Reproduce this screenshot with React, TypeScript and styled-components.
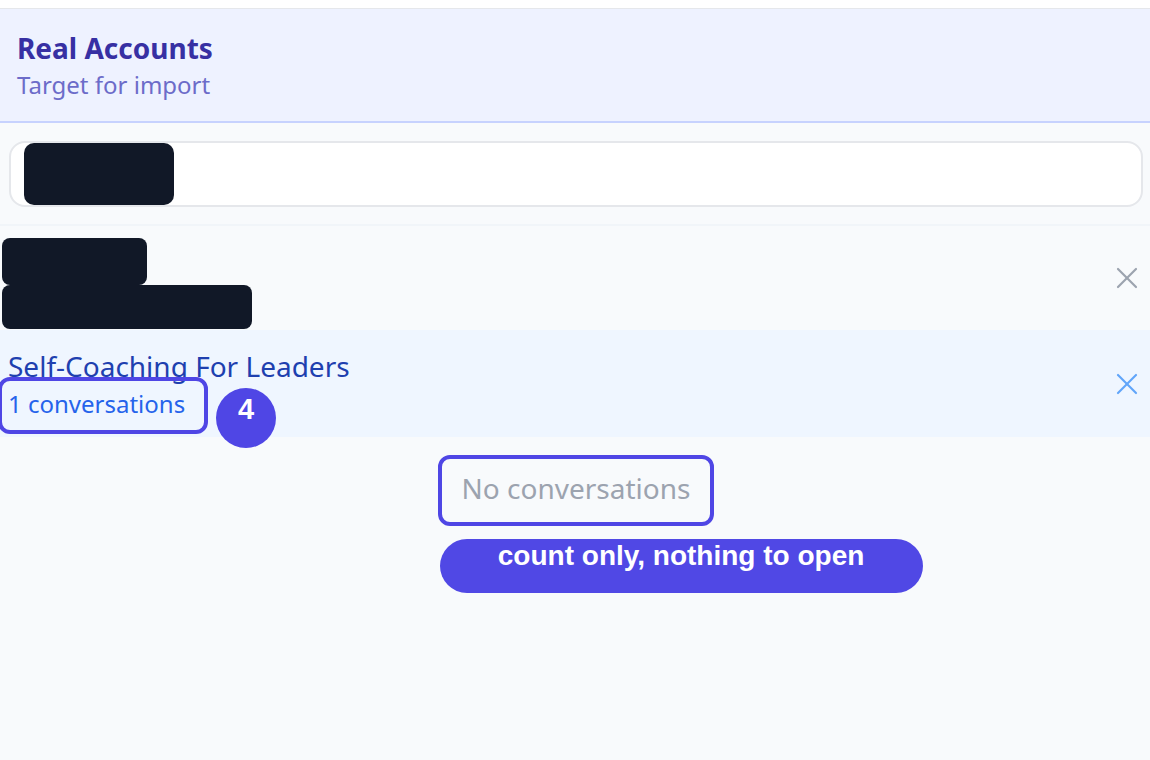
import { createGlobalStyle } from "styled-components";
import styled from "styled-components";

const GlobalStyle = createGlobalStyle`
  html, body {
    margin: 0;
    padding: 0;
    background: #ffffff;
  }
  body {
    font-family: "Noto Sans", "Open Sans", sans-serif;
  }
`;

function CloseIcon({ color }: { color: string }) {
  return (
    <svg width="22" height="22" viewBox="0 0 22 22" fill="none" stroke={color} strokeWidth="2.2" strokeLinecap="round">
      <path d="M2 2L20 20" />
      <path d="M20 2L2 20" />
    </svg>
  );
}

export default function App() {
  return (
    <>
      <GlobalStyle />
      <Page>
        <Panel>
          <Header>
            <Title>Real Accounts</Title>
            <Subtitle>Target for import</Subtitle>
          </Header>

          <SearchArea>
            <SearchBox>
              <Redacted $w={150} $h={62} $r={10} />
            </SearchBox>
          </SearchArea>

          <AccountRow>
            <AccountInfo>
              <Redacted $w={145} $h={47} $r={8} />
              <Redacted $w={250} $h={44} $r={8} />
            </AccountInfo>
            <CloseButton>
              <CloseIcon color="#9ca3af" />
            </CloseButton>
          </AccountRow>

          <AccountRow $selected>
            <AccountInfo $selected>
              <CourseName>Self-Coaching For Leaders</CourseName>
              <CountWrap>
                <CountText>1 conversations</CountText>
                <Callout $left={10} $right={23} $top={11} $h={57} />
                <StepBadge>4</StepBadge>
              </CountWrap>
            </AccountInfo>
            <CloseButton>
              <CloseIcon color="#60a5fa" />
            </CloseButton>
          </AccountRow>

          <EmptyArea>
            <EmptyWrap>
              <EmptyText>No conversations</EmptyText>
              <Callout $left={24} $right={24} $top={13} $h={71} />
              <NoteLabel>count only, nothing to open</NoteLabel>
            </EmptyWrap>
          </EmptyArea>
        </Panel>
      </Page>
    </>
  );
}

const Page = styled.div`
  width: 1150px;
  height: 760px;
  overflow: hidden;
  padding-top: 8px;
  box-sizing: border-box;
  background: #ffffff;
`;

const Panel = styled.div`
  height: 100%;
  display: flex;
  flex-direction: column;
  background: #f8fafc;
  border-top: 1.5px solid #e5e7eb;
`;

const Header = styled.div`
  background: #eef2ff;
  border-bottom: 2px solid #c7d2fe;
  padding: 22px 17px 19px;
  display: flex;
  flex-direction: column;
`;

const Title = styled.div`
  font-size: 28px;
  font-weight: 700;
  color: #3730a3;
  line-height: 34px;
`;

const Subtitle = styled.div`
  font-size: 24px;
  color: #6c6cc9;
  line-height: 34px;
  margin-top: 3px;
`;

const SearchArea = styled.div`
  padding: 18px 7px 17px 9px;
  border-bottom: 2px solid #f1f5f9;
`;

const SearchBox = styled.div`
  height: 62px;
  background: #ffffff;
  border: 2px solid #e5e7eb;
  border-radius: 16px;
  padding: 0 13px;
  display: flex;
  align-items: center;
`;

const Redacted = styled.div<{ $w: number; $h: number; $r: number }>`
  width: ${(p) => p.$w}px;
  height: ${(p) => p.$h}px;
  border-radius: ${(p) => p.$r}px;
  background: #111827;
`;

const AccountRow = styled.div<{ $selected?: boolean }>`
  display: flex;
  align-items: center;
  justify-content: space-between;
  background: ${(p) => (p.$selected ? "#eff6ff" : "#f8fafc")};
  padding: ${(p) => (p.$selected ? "0 12px 0 8px" : "0 12px 0 2px")};
`;

const AccountInfo = styled.div<{ $selected?: boolean }>`
  display: flex;
  flex-direction: column;
  align-items: flex-start;
  padding: ${(p) => (p.$selected ? "18px 0 17px" : "12px 0 1px")};
`;

const CourseName = styled.div`
  font-size: 28px;
  color: #1e40af;
  line-height: 36px;
`;

const CountWrap = styled.div`
  position: relative;
  margin-top: 4px;
`;

const CountText = styled.div`
  font-size: 24px;
  color: #2563eb;
  line-height: 32px;
`;

const Callout = styled.div<{ $left: number; $right: number; $top: number; $h: number }>`
  position: absolute;
  left: ${(p) => -p.$left}px;
  right: ${(p) => -p.$right}px;
  top: ${(p) => -p.$top}px;
  height: ${(p) => p.$h}px;
  border: 4px solid #4f46e5;
  border-radius: 12px;
  box-sizing: border-box;
`;

const StepBadge = styled.div`
  position: absolute;
  left: 208px;
  top: 0;
  width: 60px;
  height: 60px;
  border-radius: 50%;
  background: #4f46e5;
  color: #ffffff;
  font-family: "Liberation Sans", Arial, sans-serif;
  font-weight: 700;
  font-size: 29px;
  line-height: 34px;
  display: flex;
  justify-content: center;
  padding-top: 4px;
  box-sizing: border-box;
`;

const CloseButton = styled.div`
  display: flex;
  align-items: center;
  justify-content: center;
  width: 22px;
  height: 22px;
`;

const EmptyArea = styled.div`
  flex: 1;
  display: flex;
  justify-content: center;
  padding-top: 31px;
  padding-left: 2px;
`;

const EmptyWrap = styled.div`
  position: relative;
  height: 40px;
`;

const EmptyText = styled.div`
  font-size: 28px;
  color: #9ca3af;
  line-height: 40px;
`;

const NoteLabel = styled.div`
  position: absolute;
  left: -22px;
  top: 71px;
  width: 483px;
  height: 54px;
  border-radius: 27px;
  background: #5048e5;
  color: #ffffff;
  font-family: "Liberation Sans", Arial, sans-serif;
  font-weight: 700;
  font-size: 28px;
  line-height: 34px;
  text-align: center;
  white-space: nowrap;
`;
